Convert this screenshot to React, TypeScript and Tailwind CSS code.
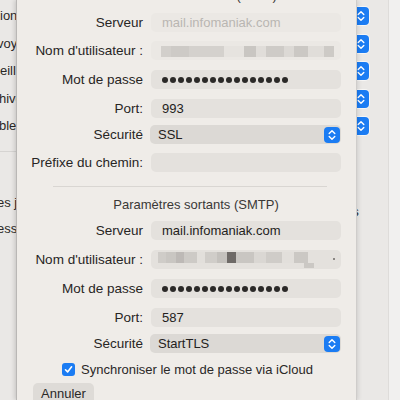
import React from "react";

const FONT = "font-['Liberation_Sans',Arial,sans-serif]";

function Stepper({ className = "" }: { className?: string }) {
  return (
    <div className={`flex items-center justify-center rounded-[4px] bg-[#1b7cf3] ${className}`}>
      <svg width="8" height="12" viewBox="0 0 8 12" fill="none">
        <path d="M1.2 4.6 L4 1.8 L6.8 4.6" stroke="white" strokeWidth="1.4" strokeLinecap="round" strokeLinejoin="round" />
        <path d="M1.2 7.4 L4 10.2 L6.8 7.4" stroke="white" strokeWidth="1.4" strokeLinecap="round" strokeLinejoin="round" />
      </svg>
    </div>
  );
}

function Row({ label, children, className = "" }: { label: string; children: React.ReactNode; className?: string }) {
  return (
    <div className={`flex items-center h-[19px] ${className}`}>
      <div className="w-[126px] text-right text-[13.5px] leading-[16px] text-[#272524] whitespace-nowrap">{label}</div>
      <div className="ml-[8px] w-[190px] h-full">{children}</div>
    </div>
  );
}

function Field({ children, disabled = false }: { children?: React.ReactNode; disabled?: boolean }) {
  return (
    <div
      className={`h-full w-full rounded-[5px] pl-[11px] flex items-center text-[13px] leading-[16px] ${
        disabled ? "bg-[#ebe8e4] text-[#b9b6b2]" : "bg-[#e4e1dd] text-[#232120]"
      }`}
    >
      {children}
    </div>
  );
}

function Popup({ value }: { value: string }) {
  return (
    <div className="-ml-[1px] h-full w-[191px] rounded-[5px] bg-[#dcd9d5] pl-[8px] pr-[1px] flex items-center justify-between text-[13px] leading-[16px] text-[#232120]">
      <span>{value}</span>
      <Stepper className="w-[16px] h-[16px]" />
    </div>
  );
}

function Dots() {
  return (
    <div className="flex gap-[2px]">
      {Array.from({ length: 16 }).map((_, i) => (
        <span key={i} className="w-[6px] h-[6px] rounded-full bg-[#2b2928]" />
      ))}
    </div>
  );
}

const BLUR_IMAP = [
  { w: 10, c: "#d2cfcb" },
  { w: 18, c: "#cdcac6" },
  { w: 35, c: "#d4d1cd" },
  { w: 20, c: "#e6e3df" },
  { w: 12, c: "#c9c6c2" },
  { w: 10, c: "#e0ddd9" },
  { w: 18, c: "#cecbc7" },
  { w: 10, c: "#dcd9d5" },
  { w: 14, c: "#cbc8c4" },
  { w: 16, c: "#e0ddd9" },
  { w: 10, c: "#cdcac6" },
];

const BLUR_SMTP = [
  { w: 8, c: "#cfccc8" },
  { w: 10, c: "#c9c6c2" },
  { w: 8, c: "#bdb9b6" },
  { w: 13, c: "#cdcac6" },
  { w: 8, c: "#e2dfdb" },
  { w: 12, c: "#d0cdc9" },
  { w: 10, c: "#c4c1bd" },
  { w: 9, c: "#6e6a67" },
  { w: 18, c: "#c9c6c2" },
  { w: 12, c: "#dad7d3" },
  { w: 16, c: "#cfccc8" },
  { w: 12, c: "#e2dfdb" },
  { w: 14, c: "#cbc8c4" },
];

function Blur({ blocks }: { blocks: { w: number; c: string }[] }) {
  return (
    <div className="flex h-[11px]">
      {blocks.map((b, i) => (
        <span key={i} className="h-full" style={{ width: b.w, backgroundColor: b.c }} />
      ))}
    </div>
  );
}

export default function App() {
  return (
    <div className={`relative w-[400px] h-[400px] overflow-hidden bg-[#eae8e6] ${FONT}`}>
      {/* window behind the sheet */}
      <div className="flex h-full">
        <div className="w-[60px] shrink-0 text-[13px] leading-[16px] text-[#2a2827]">
          <div className="flex flex-col gap-[11.5px] pt-[8px] whitespace-nowrap">
            <span>ionne</span>
            <span className="-ml-[3px]">voyer</span>
            <span>eiller</span>
            <span className="-ml-[1px]">hiver</span>
            <span className="-ml-[1px]">bles</span>
          </div>
          <div className="mt-[17px] h-px bg-[#d6d4d2]" />
          <div className="flex flex-col gap-[10px] pt-[43px] -ml-[3px] whitespace-nowrap">
            <span>es joint</span>
            <span>esse</span>
          </div>
        </div>
        <div className="flex-1" />
        <div className="w-[36px] shrink-0 flex flex-col">
          <div className="flex flex-col gap-[9.5px] pt-[7px]">
            {[0, 1, 2, 3, 4].map((i) => (
              <Stepper key={i} className="w-[17px] h-[18px] shadow-[0_0_0_1px_rgba(255,255,255,0.6)]" />
            ))}
          </div>
          <div className="mt-[69px] text-[13px] leading-[16px] text-[#2a2827] -ml-[7px]">es</div>
        </div>
        <div className="w-[12px] shrink-0 border-l border-[#dedcda] bg-[#f1f0ef]" />
      </div>

      {/* sheet */}
      <div className="absolute left-[16px] top-0 w-[341px] h-full bg-[#efece8] border-l border-[#b9b7b5] border-r border-r-[#cfcdcb] shadow-[-2px_0_4px_rgba(0,0,0,0.12),2px_0_4px_rgba(0,0,0,0.08)]">
        <div className="-mt-[12px] pl-[19px] text-center text-[13px] leading-[16px] text-[#3a3836]">
          Paramètres entrants (IMAP)
        </div>
        <Row label="Serveur" className="mt-[9px]">
          <Field disabled>mail.infomaniak.com</Field>
        </Row>
        <Row label="Nom d'utilisateur :" className="mt-[9px]">
          <div className="h-full w-full rounded-[5px] bg-[#ebe8e4] pl-[10px] pt-[5px]">
            <Blur blocks={BLUR_IMAP} />
          </div>
        </Row>
        <Row label="Mot de passe" className="mt-[10px]">
          <Field>
            <Dots />
          </Field>
        </Row>
        <Row label="Port:" className="mt-[10px]">
          <Field>993</Field>
        </Row>
        <Row label="Sécurité" className="mt-[7px]">
          <Popup value="SSL" />
        </Row>
        <Row label="Préfixe du chemin:" className="mt-[9px]">
          <Field />
        </Row>

        <div className="mt-[14px] ml-[36px] w-[274px] h-px bg-[#d9d6d2]" />

        <div className="mt-[10px] pl-[19px] text-center text-[13px] leading-[16px] text-[#3a3836]">
          Paramètres sortants (SMTP)
        </div>
        <Row label="Serveur" className="mt-[8px]">
          <Field>mail.infomaniak.com</Field>
        </Row>
        <Row label="Nom d'utilisateur :" className="mt-[10px]">
          <div className="relative h-full w-full rounded-[5px] bg-[#e4e1dd] pl-[7px] pt-[2px]">
            <Blur blocks={BLUR_SMTP} />
            <span className="absolute left-[153px] top-[13px] w-[10px] h-[5px] bg-[#cbc8c4]" />
            <span className="absolute right-[6px] top-[8px] w-[2px] h-[2px] bg-[#8a8683]" />
          </div>
        </Row>
        <Row label="Mot de passe" className="mt-[10px]">
          <Field>
            <Dots />
          </Field>
        </Row>
        <Row label="Port:" className="mt-[10px]">
          <Field>587</Field>
        </Row>
        <Row label="Sécurité" className="mt-[7px]">
          <Popup value="StartTLS" />
        </Row>

        <div className="mt-[10px] ml-[45px] flex items-center gap-[6px] h-[13px]">
          <div className="w-[13px] h-[13px] rounded-[3px] bg-[#1b7cf3] flex items-center justify-center">
            <svg width="9" height="9" viewBox="0 0 9 9" fill="none">
              <path d="M1.5 4.8 L3.6 6.9 L7.6 1.8" stroke="white" strokeWidth="1.6" strokeLinecap="round" strokeLinejoin="round" />
            </svg>
          </div>
          <span className="text-[13px] leading-[16px] text-[#2a2827] whitespace-nowrap">
            Synchroniser le mot de passe via iCloud
          </span>
        </div>

        <button className="mt-[7px] ml-[16px] w-[61px] h-[22px] rounded-[5px] bg-[#dedbd7] text-[13px] leading-[16px] text-[#2a2827] pb-[1px]">
          Annuler
        </button>
      </div>
    </div>
  );
}
